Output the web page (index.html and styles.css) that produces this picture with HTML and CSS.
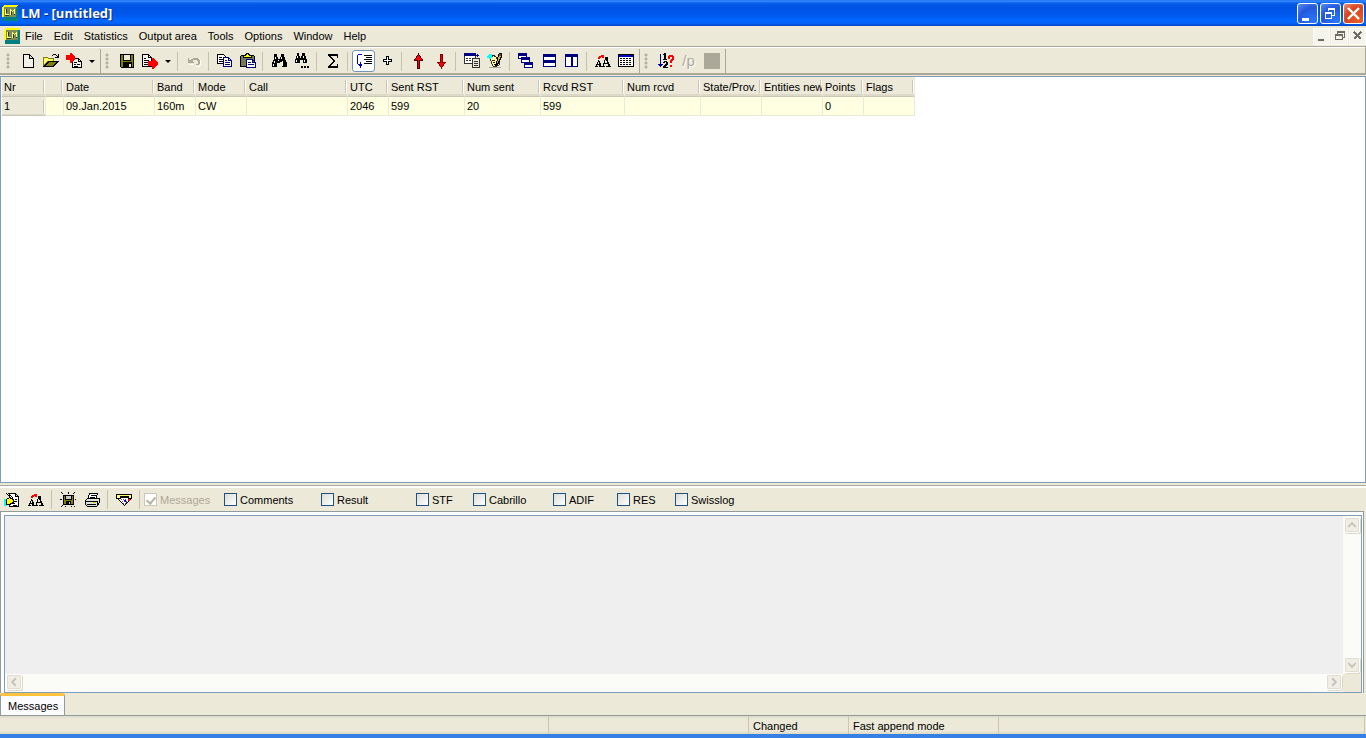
FILE: index.html
```html
<!DOCTYPE html>
<html lang="en">
<head>
<meta charset="utf-8">
<title>LM - [untitled]</title>
<link rel="stylesheet" href="styles.css">
</head>
<body>
<svg class="defs" aria-hidden="true">
  <symbol id="logo" viewBox="0 0 16 16">
    <path fill="#008080" d="M1 2h15v14H1z"/><path fill="#ff0" d="M2 0h14l-2 2v10H0V2z"/><path fill="#7c8c58" d="M2 2h12v10H2z"/><path stroke="#333a18" fill="none" d="M4.500 4v4M9.500 10V5M12.500 10V7M3 10.500h4"/><path stroke="#ffff70" fill="none" d="M3.500 4v5.500H7M8.500 10V4M9 5.500h1M10 6.500h1M11 5.500h1M12.500 4v5"/>
  </symbol>
  <symbol id="fonts" viewBox="0 0 16 16">
    <path fill="none" stroke="#000" d="M0 13.500h3M4 13.500h3M1.500 13v-2M2.500 11V9M3.500 9V7M4.500 8v3M5.500 10v4M2 11.500h4M7 13.500h3M11 13.500h5M8.500 13v-3M9.500 10V7M10.500 7V4M11.500 4v4M12.500 6v5M13.500 9v5M14.500 11v3M9 10.500h4"/><path fill="none" stroke="#000" d="M4.500 10v4M12.500 4v7"/><path fill="red" d="M4 3h2V2h3v3H7V4H6v1H5v1H3V4h1z"/>
  </symbol>
</svg>

<header class="titlebar">
  <svg class="icon"><use href="#logo"/></svg>
  <h1>LM - [untitled]</h1>
  <div class="window-buttons">
    <button class="cap" aria-label="Minimize"><svg viewBox="1 1 19 19"><path fill="#fff" d="M5 15h7v3H5z"/></svg></button>
    <button class="cap" aria-label="Restore"><svg viewBox="1 1 19 19"><path fill="none" stroke="#fff" d="M8 5.500h7M8 6.500h7M8.500 5v3M14.500 5v8M12 12.500h3M5 9.500h7M5 10.500h7M5.500 9v7M11.500 9v7M5 15.500h7"/></svg></button>
    <button class="cap close" aria-label="Close"><svg viewBox="1 1 19 19"><path fill="none" stroke="#fff" stroke-width="2.400" d="M5 5l11 11M16 5L5 16"/></svg></button>
  </div>
</header>

<nav class="menubar">
  <svg class="icon"><use href="#logo"/></svg>
  <button>File</button><button>Edit</button><button>Statistics</button><button>Output area</button><button>Tools</button><button>Options</button><button>Window</button><button>Help</button>
  <div class="mdi-buttons">
    <button aria-label="Minimize document"><svg viewBox="0 0 15 15"><path fill="#6d6b60" d="M4 10h6v2H4z"/></svg></button>
    <button aria-label="Restore document"><svg viewBox="0 0 15 15"><path fill="none" stroke="#6d6b60" d="M5 2.500h8M5 3.500h8M5.500 2v3M12.500 2v7M11 8.500h2M3 5.500h8M3 6.500h8M3.500 5v6M10.500 5v6M3 10.500h8"/></svg></button>
    <button aria-label="Close document"><svg viewBox="0 0 15 15"><path fill="none" stroke="#6d6b60" stroke-width="2" d="M4 3l7 7M11 3l-7 7"/></svg></button>
  </div>
</nav>

<div class="toolbars">
  <div class="band">
    <span class="grip"></span>
    <button class="tool" aria-label="New"><svg class="icon" viewBox="0 0 16 16"><path fill="#f3f1e7" stroke="#000" d="M3.500 1.500h6l4 4v9h-10zM9.500 1.500v4h4"/></svg></button>
    <button class="tool" aria-label="Open"><svg class="icon" viewBox="0 0 16 16"><path fill="#ffff70" stroke="#808000" d="M.5 13.500v-9h4l1 1h5v3h-6z"/><path fill="#808000" stroke="#000" d="M1 13.500h9l5-5H6z"/><path fill="none" stroke="#000" d="M9 2.500h1M10 1.500h3M13 2.500h1M14 3.500h1M15 1v4M12 4.500h4"/></svg></button>
    <button class="tool" aria-label="Import"><svg class="icon" viewBox="0 0 16 16"><path fill="#f5f3e9" stroke="#000" d="M6.500 5.500h6l3 3v6h-9zM12.500 5.500v3h3M8 9.500h3M8 11.500h2M11 11.500h3M8 13h4"/><path fill="red" d="M0 2h4V0h1l4 4v2l-4 4H4V7H0z"/></svg></button>
    <button class="drop" aria-label="Import options"></button>
  </div>
  <div class="band">
    <span class="grip"></span>
    <button class="tool" aria-label="Save"><svg class="icon" viewBox="0 0 16 16"><path fill="#808000" stroke="#000" d="M1.500 1.500h13v13h-12l-1-1z"/><path fill="#ece9d8" stroke="#000" d="M4.500 1.500h7v6h-7z"/><path fill="#000" d="M4 9h9v6H4z"/><path fill="#ece9d8" d="M10 11h2v3h-2z"/></svg></button>
    <button class="tool" aria-label="Export"><svg class="icon" viewBox="0 0 16 16"><path fill="#f5f3e9" stroke="#000" d="M.5 1.500h6l3 3v9h-9zM6.500 1.500v3h3M2 5.500h2M2 7.500h5M2 9.500h4M2 11.500h5"/><path fill="red" d="M6 8h4V5h1l5 5v1l-5 5h-1v-3H6z"/></svg></button>
    <button class="drop" aria-label="Export options"></button>
    <span class="sep"></span>
    <button class="tool" aria-label="Undo" disabled><svg class="icon" viewBox="0 0 16 16"><path fill="none" stroke="#fff" d="M3 11.500h5M14.500 7v5M10 13.500h4"/><path fill="#aca899" d="M2 5h1v2h1v1h3v1h1v1H2zM4 7h1V6h2V5h5v1h1v1h1v4h-1v1h-3v-1h2V8h-1V7H7v1H4z"/></svg></button>
    <span class="sep"></span>
    <button class="tool" aria-label="Copy"><svg class="icon" viewBox="0 0 16 16"><path fill="#fff" stroke="#000" d="M.5 1.500h6l2 2v7h-8zM2 4.500h3M2 6.500h5M2 8.500h5"/><path fill="#fff" stroke="#000080" d="M6.500 4.500h5l3 3v6h-8zM11.500 4.500v3h3M8 7.500h2M8 9.500h5M8 11.500h5"/></svg></button>
    <button class="tool" aria-label="Paste"><svg class="icon" viewBox="0 0 16 16"><path fill="#77775b" stroke="#000" d="M.5 3.500l1-1h12l1 1v10H.5z"/><path fill="#ff0" stroke="#000" d="M3.500 4.500v-2h2l1-2h2l1 2h2v2z"/><path fill="#fff" stroke="#000080" d="M6.500 6.500h6l3 3v5h-9zM12.500 6.500v3h3M8 9.500h3M8 11.500h6"/></svg></button>
    <span class="sep"></span>
    <button class="tool" aria-label="Find"><svg class="icon" viewBox="0 0 16 16"><path fill="#000" d="M3 1h3v3h1v2h2V4h1V1h3v3h1v3h1v2h1v5h-5V9H9v1H6v4H1V9h1V7h1z"/><path stroke="#fff" d="M4.500 4v2M3.500 8v2M2.500 11v2M10.500 4v2M11.500 8v5M7.500 7v1"/></svg></button>
    <button class="tool" aria-label="Find next"><svg class="icon" viewBox="0 0 16 16"><path fill="#000" d="M3 0h2v3h1v2h1V3h1V0h3v3h1v3h1v4H9V7H6v3H1V6h1V3h1zM7 13h2v2H7zM10 13h2v2h-2zM13 13h2v2h-2z"/><path stroke="#fff" d="M3.500 3v2M2.500 7v2M9.500 3v2M10.500 7v2"/></svg></button>
    <span class="sep"></span>
    <button class="tool" aria-label="Sum"><svg class="icon" viewBox="0 0 16 16"><path fill="#000" d="M3 1h10v4h-1V3H6l4 5-5 5h7v-2h1v4H3v-1l5-6-5-6z"/></svg></button>
    <span class="sep"></span>
    <button class="tool pressed" aria-label="Fast append mode" aria-pressed="true"><svg class="icon" viewBox="0 0 16 16"><path fill="none" stroke="#0000c0" d="M2 1.500h4M1.500 2v9M2 11.500h4M4.500 9v6M3 12.500h3"/><path fill="none" stroke="#000" d="M8 2.500h8M10 4.500h6M8 6.500h8M10 8.500h6M8 10.500h8"/></svg></button>
    <button class="tool" aria-label="Add"><svg class="icon" viewBox="0 0 16 16"><path fill="#fff" stroke="#000" d="M7.500 3.500h2v3h3v2h-3v3h-2v-3h-3v-2h3z"/></svg></button>
    <span class="sep"></span>
    <button class="tool" aria-label="Up"><svg class="icon" viewBox="0 0 16 16"><path fill="red" stroke="#400" d="M8.500 1l4 6h-3v8h-2V7h-3z"/></svg></button>
    <button class="tool" aria-label="Down"><svg class="icon" viewBox="0 0 16 16"><path fill="red" stroke="#800000" d="M8.500 15l4-6h-3V1h-2v8h-3z"/></svg></button>
    <span class="sep"></span>
    <button class="tool" aria-label="Insert table"><svg class="icon" viewBox="0 0 16 16"><path fill="#fff" stroke="#333" d="M.5.5h11v10H.5z"/><path fill="#000080" d="M0 0h12v3H0zM13 1h1v1h1v1h-1v1h-1V3h-1V2h1z"/><path stroke="#333" d="M2 5.500h2M5 5.500h2M8 5.500h2M2 7.500h2M5 7.500h2"/><path fill="#ece9d8" stroke="#333" d="M8.500 5.500h7v9h-7zM10 8.500h4M10 10.500h4M10 12.500h4"/></svg></button>
    <button class="tool" aria-label="Edit entry"><svg class="icon" viewBox="0 0 16 16"><path fill="#aca899" d="M2 14h12v1H2z"/><path fill="#fff8a0" stroke="#333" d="M3.500 5.500l3-3 5 3 1 6-3 2h-3l-2-3z"/><path fill="#0ff" d="M0 3h1V2h1V1h3v2h1v1H5v1H4v1H2V5H0z"/><path stroke="#222" d="M5.500 2v2M6 2.500h2M5 7.500h3M6 9.500h2M7 11.500h2M9 5.500h2"/><path fill="#d8b800" stroke="#000" d="M11.500 2.500l1-2h2v3l-4 8-2 1 1-3z"/><path fill="#8b4a10" d="M12 1h2v2h-2z"/></svg></button>
    <span class="sep"></span>
    <button class="tool" aria-label="Cascade"><svg class="icon" viewBox="0 0 16 16"><path fill="#fff" stroke="#000080" d="M.5.5h8v5h-8zM3.500 4.500h8v5h-8zM6.500 9.500h8v5h-8z"/><path fill="#000080" d="M0 0h9v3H0zM3 4h9v3H3zM6 9h9v3H6z"/></svg></button>
    <button class="tool" aria-label="Tile horizontally"><svg class="icon" viewBox="0 0 16 16"><path fill="#fff" stroke="#000080" d="M2.500 1.500h12v6h-12zM2.500 8.500h12v5h-12z"/><path fill="#000080" d="M2 1h13v3H2zM2 8h13v2H2z"/></svg></button>
    <button class="tool" aria-label="Tile vertically"><svg class="icon" viewBox="0 0 16 16"><path fill="#fff" stroke="#000080" d="M1.500 1.500h6v12h-6zM8.500 1.500h5v12h-5z"/><path fill="#000080" d="M1 1h13v3H1z"/></svg></button>
    <span class="sep"></span>
    <button class="tool" aria-label="Fonts"><svg class="icon"><use href="#fonts"/></svg></button>
    <button class="tool" aria-label="Columns"><svg class="icon" viewBox="0 0 16 16"><path fill="#fff" stroke="#000" d="M.5 1.500h15v12H.5z"/><path fill="#0000c0" d="M1 2h14v2H1z"/><path stroke="#000" stroke-dasharray="2 1" d="M2 5.500h12M2 7.500h12M2 9.500h12M2 11.500h12"/></svg></button>
  </div>
  <div class="band">
    <span class="grip"></span>
    <button class="tool" aria-label="Renumber"><svg class="icon" viewBox="0 0 16 16"><path fill="none" stroke="#0000a0" d="M2.500 1v13M0 11.500h5M1 12.500h3"/><path fill="#000" d="M6 0h2v6h1v1H5V6h1V2H5V1h1zM5 9h1V8h3v1h1v3H9v1H8v1h2v1H5v-2h1v-1h1v-1h1V9H7v1H5z"/><path fill="red" d="M10 3h1V2h4v1h1v4h-1v1h-1v2h-2V7h1V6h1V4h-2v2h-2zM12 12h2v2h-2z"/></svg></button>
    <button class="tool slash" disabled>/p</button>
    <button class="tool" aria-label="Stop" disabled><svg class="icon" viewBox="0 0 16 16"><path fill="#aca899" d="M0 0h16v16H0z"/></svg></button>
  </div>
</div>

<main class="log">
  <table>
    <colgroup><col class="c-nr"><col class="c-mark"><col class="c-date"><col class="c-short"><col class="c-mode"><col class="c-call"><col class="c-short"><col class="c-num"><col class="c-num"><col class="c-rcvd"><col class="c-num"><col class="c-mid"><col class="c-mid"><col class="c-short"><col class="c-mode"></colgroup>
    <thead><tr><th>Nr</th><th></th><th>Date</th><th>Band</th><th>Mode</th><th>Call</th><th>UTC</th><th>Sent RST</th><th>Num sent</th><th>Rcvd RST</th><th>Num rcvd</th><th>State/Prov.</th><th>Entities new</th><th>Points</th><th>Flags</th></tr></thead>
    <tbody><tr><th>1</th><td></td><td>09.Jan.2015</td><td>160m</td><td>CW</td><td></td><td>2046</td><td>599</td><td>20</td><td>599</td><td></td><td></td><td></td><td>0</td><td></td></tr></tbody>
  </table>
</main>

<section class="output">
  <div class="output-bar">
    <button class="tool" aria-label="Edit output"><svg class="icon" viewBox="0 0 16 16"><path fill="#fff" stroke="#000" d="M5.500 1.500h6l3 3v10h-9zM11.500 1.500v3h3M8 7.500h2M11 7.500h2M9 9.500h4M8 11.500h3M9 13h4"/><path fill="#0ff" d="M0 7h3v7H0z"/><path fill="#ff0" stroke="#000" d="M2.500 7.500l3-2 4 2v3l-4 2h-3z"/><path fill="none" stroke="#000" d="M2 1l7 7M4 1l5 5"/></svg></button>
    <button class="tool" aria-label="Output fonts"><svg class="icon"><use href="#fonts"/></svg></button>
    <span class="sep"></span>
    <button class="tool" aria-label="Save output"><svg class="icon" viewBox="0 0 16 16"><path fill="#808000" stroke="#000" d="M3.500 3.500h10v9h-10z"/><path fill="#ccc" stroke="#000" d="M5.500 3.500h6v4h-6z"/><path fill="#000" d="M6 9h5v4H6z"/><path fill="#ccc" d="M9 10h1v2H9z"/><path fill="none" stroke="#000" d="M8.500 0v2M0 7.500h2M15 7.500h1M1 .5h1M2 1.500h1M14 .5h1M13 1.500h1M1 14.500h1M2 13.500h1M14 14.500h1M5 14.500h1M11 14.500h1"/></svg></button>
    <button class="tool" aria-label="Print"><svg class="icon" viewBox="0 0 16 16"><path fill="#fff" stroke="#000" d="M5.500 1.500h8l-2 6h-8zM7 3.500h5M6 5.500h5"/><path fill="#e0e0e0" stroke="#000" d="M1.500 8.500l2-2h12v4l-3 4h-9l-2-2zM1 9.500h12M3 12.500h9"/><path fill="#cc0" d="M9 10h3v1H9z"/><path stroke="#000" d="M13.500 9v4M15.500 6v5"/></svg></button>
    <span class="sep"></span>
    <button class="tool" aria-label="Clear output"><svg class="icon" viewBox="0 0 16 16"><path fill="#fff" stroke="#000" d="M2.500 7.500l2-2h8l2 2-6 6z"/><path fill="#ffff60" stroke="#000" d="M.5 2.500h15v4h-3v-2h-8v2h-4z"/><path fill="#00c" d="M8 8h2v2H8zM10 10h1v1h-1z"/><path fill="red" d="M12 7h2v2h-2z"/><path stroke="#555" stroke-dasharray="1 1" d="M5 7.500h6M6 9.500h5M7 11.500h3"/></svg></button>
    <span class="sep"></span>
    <div class="checks">
      <label class="off"><input type="checkbox" checked disabled>Messages</label>
      <label><input type="checkbox">Comments</label>
      <label><input type="checkbox">Result</label>
      <label><input type="checkbox">STF</label>
      <label><input type="checkbox">Cabrillo</label>
      <label><input type="checkbox">ADIF</label>
      <label><input type="checkbox">RES</label>
      <label><input type="checkbox">Swisslog</label>
    </div>
  </div>
  <div class="pane">
    <div class="viewer">
      <div class="page"></div>
      <div class="vscroll">
        <button aria-label="Scroll up"><svg viewBox="0 0 15 15"><path d="M3.500 9.500l4-4 4 4"/></svg></button>
        <button aria-label="Scroll down"><svg viewBox="0 0 15 15"><path d="M3.500 5.500l4 4 4-4"/></svg></button>
      </div>
      <div class="hscroll">
        <button aria-label="Scroll left"><svg viewBox="0 0 15 15"><path d="M9.500 3.500l-4 4 4 4"/></svg></button>
        <button aria-label="Scroll right"><svg viewBox="0 0 15 15"><path d="M5.500 3.500l4 4-4 4"/></svg></button>
      </div>
    </div>
  </div>
  <div class="tabs"><button>Messages</button></div>
</section>

<footer class="status"><span></span><span></span><span>Changed</span><span>Fast append mode</span><span></span></footer>
</body>
</html>
```
FILE: styles.css
```css
* { box-sizing: border-box; }
body {
  margin: 0;
  height: 100vh;
  display: flex;
  flex-direction: column;
  background: #ece9d8;
  color: #000;
  font: 11px/14px "Liberation Sans", Arial, sans-serif;
  border-bottom: 4px solid #3580e4;
  overflow: hidden;
}
button {
  font: inherit;
  color: inherit;
  border: 0;
  padding: 0;
  background: none;
  flex: none;
}
svg { display: block; flex: none; shape-rendering: crispEdges; }
.defs { display: none; }
.icon { width: 16px; height: 16px; }

.titlebar {
  flex: none;
  height: 26px;
  display: flex;
  align-items: center;
  gap: 3px;
  padding: 0 2px;
  background: linear-gradient(#1c6cf0 0, #3c8cff 1px, #0862ec 3px, #0054e3 6px, #0056ea 14px, #0066ff 20px, #0066fc 23px, #0043c4 26px);
}
.titlebar h1 {
  margin: 0;
  flex: 1;
  color: #fff;
  font: bold 13px/16px "Open Sans", sans-serif;
  text-shadow: 1px 1px #0a2a80;
}
.window-buttons { display: flex; gap: 2px; }
.cap {
  width: 21px;
  height: 21px;
  border: 1px solid #fff;
  border-radius: 3px;
  background: radial-gradient(circle at 80% 90%, #2878ff, #2458dc 60%, #5c8cf4);
}
.cap.close { background: radial-gradient(circle at 80% 90%, #e85c28, #d84420 60%, #f09070); }
.cap svg { width: 19px; height: 19px; }
.cap.close svg { shape-rendering: auto; }

.menubar {
  flex: none;
  height: 20px;
  display: flex;
  align-items: center;
  padding: 0 0 0 4px;
}
.menubar > button { padding: 0 6px 0 5px; }
.mdi-buttons { display: flex; gap: 1px; margin-left: auto; }
.mdi-buttons button {
  width: 17px;
  height: 17px;
  background: #f5f4ec;
  border: 1px solid #fbfaf5;
}
.mdi-buttons svg { width: 15px; height: 15px; }

.toolbars {
  flex: none;
  height: 29px;
  display: flex;
  padding: 2px 0 0 2px;
  border-top: 1px solid #aca899;
  border-bottom: 2px solid #aca899;
  border-right: 1px solid #aca899;
  box-shadow: inset 0 1px #fff;
}
.band {
  display: flex;
  align-items: center;
  padding-right: 2px;
  border-right: 1px solid #aca899;
}
.grip {
  width: 14px;
  height: 16px;
  background: radial-gradient(circle at 6px 2px, #b5b2a2 1px, #ece9d800 2px) 0 0 / 14px 4px;
}
.tool {
  width: 23px;
  height: 22px;
  display: flex;
  align-items: center;
  justify-content: center;
}
.tool.pressed {
  background: #fff;
  border: 1px solid #7095b8;
  border-radius: 3px;
}
.slash {
  color: #aca899;
  font-size: 15px;
  text-shadow: 1px 1px #fff;
}
.drop { width: 13px; height: 22px; }
.drop::before {
  content: "";
  display: block;
  width: 0;
  margin: 0 auto;
  border: 3px solid transparent;
  border-top-color: #000;
  border-bottom: 0;
}
.sep {
  flex: none;
  width: 8px;
  height: 19px;
  background: linear-gradient(90deg, transparent 3px, #c5c2b0 3px, #c5c2b0 4px, transparent 4px);
}

.log {
  flex: 1;
  min-height: 0;
  margin-top: 1px;
  padding-left: 1px;
  background: #fff;
  border: 1px solid #7f9db9;
}
table { table-layout: fixed; width: 913px; border-collapse: separate; border-spacing: 0; }
.c-nr { width: 44px; }
.c-mark { width: 18px; }
.c-date { width: 91px; }
.c-short { width: 41px; }
.c-mode { width: 51px; }
.c-call { width: 101px; }
.c-num { width: 76px; }
.c-rcvd { width: 84px; }
.c-mid { width: 61px; }
th, td {
  height: 19px;
  padding: 0 0 0 2px;
  font-weight: normal;
  text-align: left;
  white-space: nowrap;
  overflow: hidden;
  border-right: 1px solid #ece9d8;
  border-bottom: 1px solid #ece9d8;
}
td { background: #ffffe1; }
th {
  background: linear-gradient(90deg, #c9c6b6 1px, #fff 1px) right center / 2px 13px no-repeat, #ece9d8;
  border-bottom-color: #cbc7b8;
}
thead th { height: 20px; box-shadow: inset 0 -2px #dedac9; }
tbody th { box-shadow: inset 0 -1px #dedac9; }

.output { flex: none; border-top: 2px solid #ece9d8; }
.output-bar {
  height: 26px;
  display: flex;
  align-items: center;
  border-top: 1px solid #aca899;
  box-shadow: inset 0 2px #fff;
  padding-top: 2px;
}
.output-bar .tool { width: 24px; }
.checks {
  display: grid;
  grid-template-columns: 80px 97px 95px 57px 80px 64px 58px 70px;
}
.checks label { display: flex; align-items: center; gap: 3px; }
.checks .off { color: #aca899; }
.checks input {
  appearance: none;
  flex: none;
  width: 13px;
  height: 13px;
  margin: 0;
  border: 1px solid #1c5180;
  background: linear-gradient(135deg, #dcdcd7, #fff);
}
.checks input:disabled { border-color: #cac8bb; background: #fff; }
.checks input:checked::after {
  content: "";
  display: block;
  width: 4px;
  height: 7px;
  margin: 1px auto 0;
  border: solid #b8b5a6;
  border-width: 0 2px 2px 0;
  transform: rotate(40deg);
}
.pane {
  height: 182px;
  margin-right: 2px;
  padding: 3px 1px 0 3px;
  background: #fff;
  border: solid #919b9c;
  border-width: 1px 1px 0;
}
.viewer {
  height: 100%;
  display: grid;
  grid-template: 1fr 18px / 1fr 18px;
  border: 1px solid #7f9db9;
  background: #ece9d8;
}
.page { background: #efefef; }
.vscroll, .hscroll { display: flex; justify-content: space-between; background: #fbfbf7; }
.vscroll { flex-direction: column; padding: 1px; }
.hscroll { padding: 0 1px; }
.vscroll button, .hscroll button {
  width: 16px;
  height: 16px;
  border: 1px solid #fff;
  border-radius: 2px;
  background: #f0eee5;
  box-shadow: inset 0 0 0 1px #e0ddd0, 1px 1px #dcd8c4;
}
.vscroll svg, .hscroll svg { width: 14px; height: 14px; fill: none; stroke: #c5c3b8; stroke-width: 2; shape-rendering: auto; }
.tabs { height: 23px; border-bottom: 1px solid #919b9c; }
.tabs button {
  height: 22px;
  padding: 1px 6px 0 7px;
  background: #fcfcfe;
  border: 1px solid #919b9c;
  border-top: 3px solid #ffc23c;
  border-bottom: 0;
  border-radius: 3px 3px 0 0;
}
.status {
  flex: none;
  height: 18px;
  display: grid;
  grid-template-columns: 549px 200px 100px 150px 1fr;
  margin-right: 1px;
  background: linear-gradient(#dedac9, #ece9d8 3px, #ece9d8 15px, #dcd8c4);
}
.status span { padding: 3px 4px 0; border-right: 1px solid #cbc7b4; }
```
